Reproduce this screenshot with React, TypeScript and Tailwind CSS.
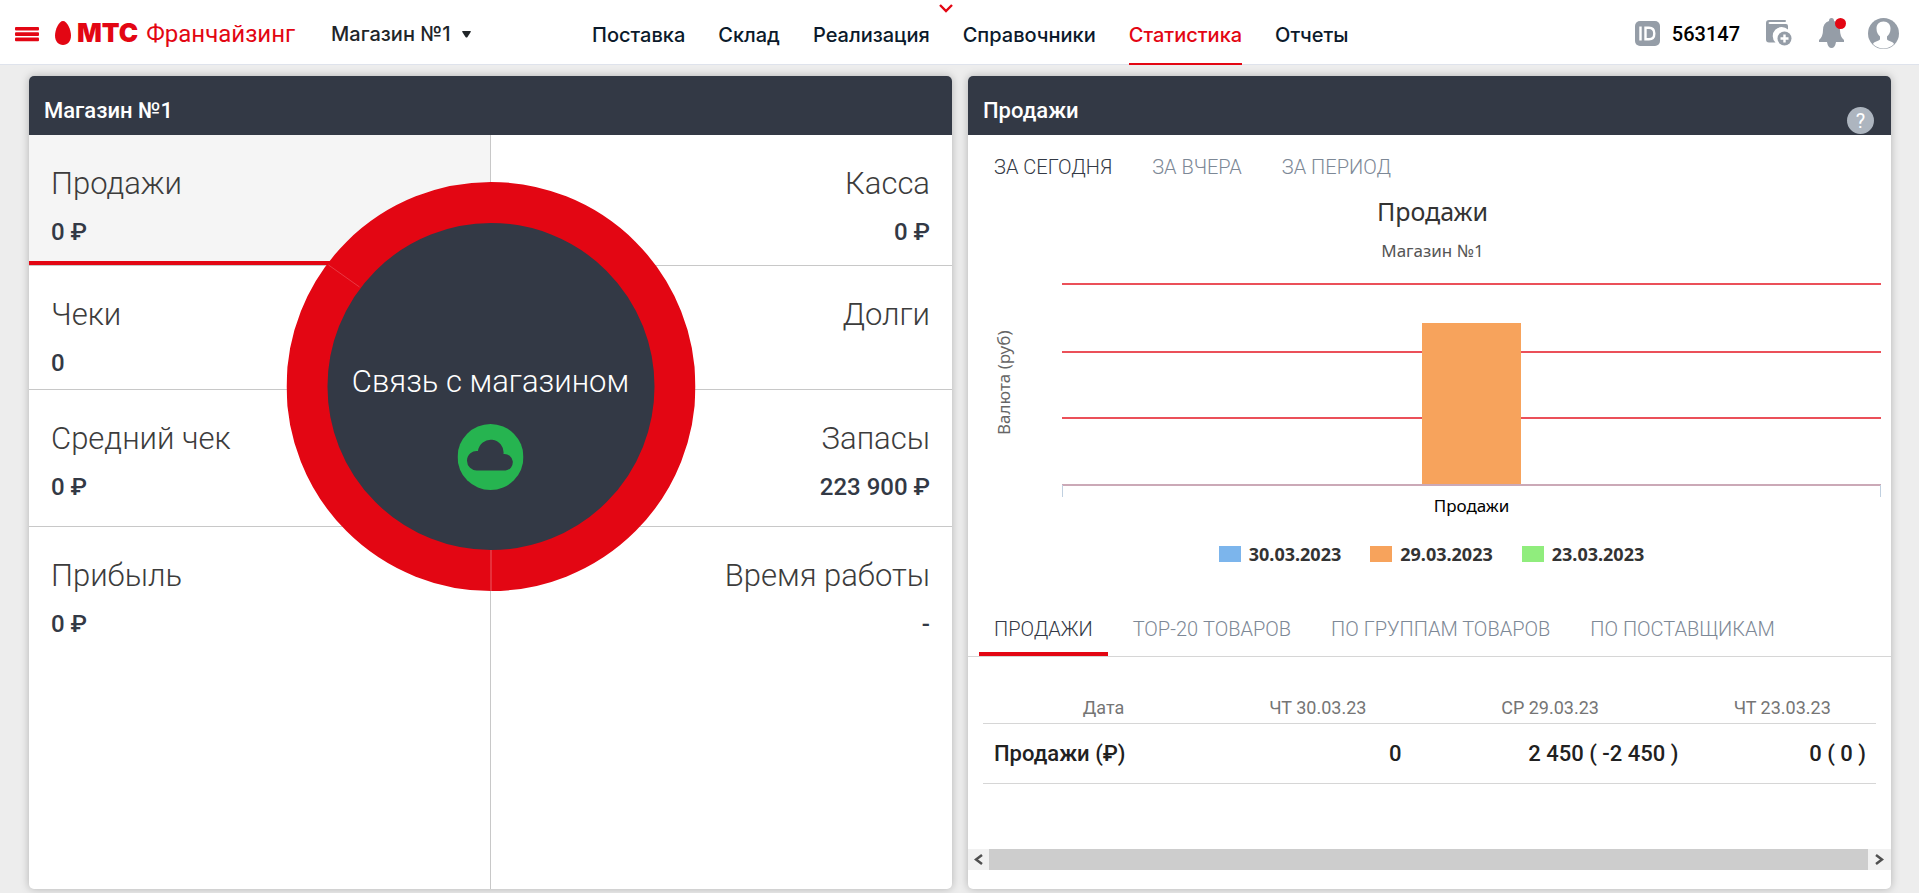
import { ReactNode } from "react"

type Metric = { name: string; value: string; height: string; active?: boolean }

const leftMetrics: Metric[] = [
  { name: "Продажи", value: "0 ₽", height: "h-[131px]", active: true },
  { name: "Чеки", value: "0", height: "h-[124px]" },
  { name: "Средний чек", value: "0 ₽", height: "h-[137px]" },
  { name: "Прибыль", value: "0 ₽", height: "grow" },
]

const rightMetrics: Metric[] = [
  { name: "Касса", value: "0 ₽", height: "h-[131px]" },
  { name: "Долги", value: "", height: "h-[124px]" },
  { name: "Запасы", value: "223 900 ₽", height: "h-[137px]" },
  { name: "Время работы", value: "-", height: "grow" },
]

const navItems = ["Поставка", "Склад", "Реализация", "Справочники", "Статистика", "Отчеты"]
const periods = ["ЗА СЕГОДНЯ", "ЗА ВЧЕРА", "ЗА ПЕРИОД"]
const reports = ["ПРОДАЖИ", "TOP-20 ТОВАРОВ", "ПО ГРУППАМ ТОВАРОВ", "ПО ПОСТАВЩИКАМ"]

const legend = [
  { date: "30.03.2023", color: "bg-[#7cb5ec]" },
  { date: "29.03.2023", color: "bg-[#f7a35c]" },
  { date: "23.03.2023", color: "bg-[#90ed7d]" },
]

function Header() {
  return (
    <header className="flex h-[65px] shrink-0 items-center border-b border-[#dfe3ec] bg-white pl-[15px] pr-5 font-['Inter',sans-serif] text-xl font-medium text-[#0b1a2b]">
      <div className="flex w-[577px] shrink-0 items-center">
        <button aria-label="Меню" className="mr-4 pt-1">
          <svg width="24" height="15" viewBox="0 0 24 15" fill="#e30613">
            <rect width="24" height="3.600" rx="1" />
            <rect y="5.300" width="24" height="3.600" rx="1" />
            <rect y="10.600" width="24" height="3.600" rx="1" />
          </svg>
        </button>
        <a href="#" className="flex items-center pt-0.5 text-[#e30613]">
          <svg width="16" height="24" viewBox="0 0 16 24" fill="currentColor">
            <path d="M8 0C4 0 0 8.400 0 14.600C0 20.400 3.400 24 8 24S16 20.400 16 14.600C16 8.400 12 0 8 0Z" />
          </svg>
          <span className="ml-1.5 text-[26px] leading-8 font-black">МТС</span>
          <span className="ml-2 pt-0.5 font-['Roboto'] text-2xl font-normal">Франчайзинг</span>
        </a>
        <button className="ml-9 flex items-center gap-3 pt-1 text-[#212529]">
          Магазин №1
          <svg width="9" height="7" viewBox="0 0 9 7" fill="currentColor">
            <path d="M0.500 0H8.500Q9 0 8.700 1L5.500 6Q4.500 7 3.500 6L0.300 1Q0 0 0.500 0Z" />
          </svg>
        </button>
      </div>

      <nav className="relative flex h-[65px] items-center gap-[33px]">
        {navItems.map((item) => (
          <a
            key={item}
            href="#"
            className={
              item === "Статистика"
                ? "flex h-[65px] items-center border-b-2 border-[#e30613] pt-2 text-[#e30613]"
                : "flex h-[65px] items-center border-b-2 border-transparent pt-2"
            }
          >
            {item}
          </a>
        ))}
        <button aria-label="Развернуть" className="absolute left-[347px] top-1">
          <svg className="block" width="14" height="9" viewBox="0 0 14 9" fill="none" stroke="#e30613" strokeWidth="2.400">
            <path d="M1 1L7 7L13 1" />
          </svg>
        </button>
      </nav>

      <div className="ml-auto flex items-center pt-0.5 text-[#959da7]">
        <svg width="25" height="25" viewBox="0 0 25 25" fill="none">
          <rect width="25" height="25" rx="5" fill="currentColor" />
          <path d="M5.500 5.500V19.500M10.500 6.700H14Q19.300 6.700 19.300 12.500T14 18.300H10.500Z" stroke="#fff" strokeWidth="2.400" />
        </svg>
        <span className="ml-3 pt-0.5 font-['Roboto'] text-black">563147</span>
        <button aria-label="Касса" className="ml-[26px]">
          <svg width="26" height="26" viewBox="0 0 26 26" fill="currentColor">
            <path d="M3 0H19Q20 0 20 1T19 2H4Q2.500 2 2.500 3T4 4H20Q22 4 22 6V9.500A9 9 0 0 0 9.500 22.500H3Q0 22.500 0 19.500V3Q0 0 3 0Z" />
            <circle cx="18.500" cy="18.500" r="7" />
            <path d="M18.500 14.500V22.500M14.500 18.500H22.500" stroke="#fff" strokeWidth="2.400" />
          </svg>
        </button>
        <button aria-label="Уведомления" className="ml-[27px]">
          <svg width="28" height="31" viewBox="0 0 28 31" fill="currentColor">
            <path d="M10 3Q10 0 12.500 0T15 3Q21 5 21 12Q21 19 25 22V24H17Q16 30 12.500 30T8 24H0V22Q4 19 4 12Q4 5 10 3Z" />
            <circle cx="21.500" cy="5.500" r="5.500" fill="#e30613" />
          </svg>
        </button>
        <button aria-label="Профиль" className="ml-[21px]">
          <svg width="31" height="31" viewBox="0 0 31 31">
            <circle cx="15.500" cy="15.500" r="15.500" fill="#959da7" />
            <path
              d="M15.500 3.500C11 3.500 8.500 6.500 8.500 10.500C8.500 14.500 10 16.500 12 18.500V21C12 23 6 23 5 26A14.500 14.500 0 0 0 26 26C25 23 19 23 19 21V18.500C21 16.500 22.500 14.500 22.500 10.500C22.500 6.500 20 3.500 15.500 3.500Z"
              fill="#fff"
            />
          </svg>
        </button>
      </div>
    </header>
  )
}

function Panel({ title, action, children }: { title: string; action?: ReactNode; children: ReactNode }) {
  return (
    <section className="flex min-w-0 flex-col overflow-hidden rounded-[5px] bg-white shadow-[0_0_8px_rgba(0,0,0,0.25)]">
      <div className="flex h-[59px] shrink-0 items-end justify-between bg-[#333945] pl-[15px] pr-[17px] text-white">
        <h2 className="pb-[10px] text-[22px] leading-7 font-medium">{title}</h2>
        {action}
      </div>
      {children}
    </section>
  )
}

function MetricCell({ metric, right }: { metric: Metric; right?: boolean }) {
  return (
    <div
      className={`flex flex-col border-[#c8c8c8] px-[22px] pt-[31px] ${metric.height} ${metric.height === "grow" ? "" : "border-b"} ${right ? "items-end" : "items-start"} ${metric.active ? "bg-[#f5f5f5] shadow-[inset_0_-4px_0_#e30613]" : ""}`}
    >
      <h3 className="text-[31px] leading-9 font-light text-[#3c3c3c]">{metric.name}</h3>
      <p className="mt-4 text-2xl leading-7 font-medium text-[#333945]">{metric.value}</p>
    </div>
  )
}

function StoreLink() {
  return (
    <button className="absolute left-1/2 top-[47px] flex size-[409px] -translate-x-1/2 flex-col items-center justify-center rounded-full pt-20 text-white">
      <svg className="absolute inset-0" width="409" height="409" viewBox="0 0 409 409">
        <circle cx="204.500" cy="204.500" r="184" fill="#333945" stroke="#e30613" strokeWidth="41" />
        {/* seams between the ring segments */}
        <path d="M42 83L73 105" stroke="#fff" strokeOpacity="0.200" />
        <path d="M204.500 368V409" stroke="#fff" strokeOpacity="0.350" />
      </svg>
      <span className="relative text-[31px] leading-9 font-light whitespace-nowrap">Связь с магазином</span>
      <svg className="relative mt-6" width="66" height="66" viewBox="0 0 66 66">
        <circle cx="33" cy="33" r="33" fill="#26b450" />
        <path
          d="M20 46.500A9.800 9.800 0 1 1 20.500 27A12.800 12.800 0 0 1 46 30A8.300 8.300 0 1 1 48 46.500Z"
          fill="#333945"
        />
      </svg>
    </button>
  )
}

function StorePanel() {
  return (
    <Panel title="Магазин №1">
      <div className="relative grid grow grid-cols-2">
        <div className="flex flex-col border-r border-[#c8c8c8]">
          {leftMetrics.map((m) => (
            <MetricCell key={m.name} metric={m} />
          ))}
        </div>
        <div className="flex flex-col">
          {rightMetrics.map((m) => (
            <MetricCell key={m.name} metric={m} right />
          ))}
        </div>
        <StoreLink />
      </div>
    </Panel>
  )
}

function SalesChart() {
  return (
    <figure className="flex flex-col font-['Noto_Sans',sans-serif] text-[17px] text-[#333333]">
      <h3 className="pl-1.5 text-center text-[25px] leading-8">Продажи</h3>
      <p className="mt-3 pl-1.5 text-center leading-6 text-[#555555]">Магазин №1</p>
      <div className="mt-[18px] flex">
        <div className="flex w-[94px] justify-start pl-6">
          <span className="h-[204px] rotate-180 text-center leading-6 text-[#666666] [writing-mode:vertical-rl]">
            Валюта (руб)
          </span>
        </div>
        <div className="min-w-0 grow pr-[10px]">
          <svg className="block w-full" height="217" shapeRendering="crispEdges">
            <g fill="#e30613" fillOpacity="0.700">
              <rect y="2" width="100%" height="2" />
              <rect y="70" width="100%" height="2" />
              <rect y="136" width="100%" height="2" />
            </g>
            <rect x="44%" y="42" width="12%" height="161" fill="#f7a35c" />
            <rect y="203" width="100%" height="2" fill="#cba9b7" />
            <rect y="204" width="1" height="12" fill="#c0d0e0" />
            <svg x="100%" overflow="visible">
              <rect x="-1" y="204" width="1" height="12" fill="#c0d0e0" />
            </svg>
          </svg>
          <p className="-mt-1 text-center leading-6 text-black">Продажи</p>
        </div>
      </div>
      <figcaption className="mt-6 flex justify-center gap-[29px] pl-1 text-lg font-bold">
        {legend.map((l) => (
          <span key={l.date} className="flex items-center gap-2 leading-6">
            <span className={`h-4 w-[22px] ${l.color}`} />
            {l.date}
          </span>
        ))}
      </figcaption>
    </figure>
  )
}

function SalesTable() {
  return (
    <table className="mx-[15px] mt-[35px] table-fixed border-collapse">
      <thead>
        <tr className="h-[31px] border-b border-[#d6d6d6] text-lg leading-6 text-[#757575]">
          <th className="w-[27%] pt-0.5 font-normal">Дата</th>
          <th className="w-[21%] pt-0.5 font-normal">ЧТ 30.03.23</th>
          <th className="w-[31%] pt-0.5 font-normal">СР 29.03.23</th>
          <th className="w-[21%] pt-0.5 font-normal">ЧТ 23.03.23</th>
        </tr>
      </thead>
      <tbody>
        <tr className="h-[60px] border-b border-[#d6d6d6] text-right text-[22px] font-medium text-[#212121]">
          <th className="px-[11px] text-left font-medium">Продажи (₽)</th>
          <td className="px-[10px]">0</td>
          <td className="px-[10px]">2 450 ( -2 450 )</td>
          <td className="px-[10px]">0 ( 0 )</td>
        </tr>
      </tbody>
    </table>
  )
}

function ScrollBar() {
  return (
    <div className="mt-auto mb-[19px] flex h-[21px] shrink-0 bg-[#f1f1f1] text-[#505050]">
      <button aria-label="Прокрутить влево" className="grid w-[21px] place-items-center">
        <svg width="9" height="11" viewBox="0 0 9 11" fill="none" stroke="currentColor" strokeWidth="2.500">
          <path d="M8 1L2 5.500L8 10" />
        </svg>
      </button>
      <div className="grow bg-[#cdcdcd]" />
      <button aria-label="Прокрутить вправо" className="grid w-[23px] place-items-center">
        <svg width="9" height="11" viewBox="0 0 9 11" fill="none" stroke="currentColor" strokeWidth="2.500">
          <path d="M1 1L7 5.500L1 10" />
        </svg>
      </button>
    </div>
  )
}

function SalesPanel() {
  return (
    <Panel
      title="Продажи"
      action={
        <button className="mb-px grid size-[27px] place-items-center rounded-full bg-[#adb5bf] text-xl leading-6">
          ?
        </button>
      }
    >
      <div className="flex gap-10 px-[26px] pt-[18px] pb-[14px] text-xl leading-7 font-light">
        {periods.map((p, i) => (
          <button key={p} className={i === 0 ? "text-[#333945]" : "text-[#7d8896]"}>
            {p}
          </button>
        ))}
      </div>
      <SalesChart />
      <div className="mt-[49px] flex gap-[10px] border-b border-[#d6d6d6] px-[11px] text-xl leading-7 font-light">
        {reports.map((r, i) => (
          <button
            key={r}
            className={
              i === 0
                ? "border-b-4 border-[#e30613] px-[15px] pb-[9px] text-[#333945]"
                : "border-b-4 border-transparent px-[15px] pb-[9px] text-[#7d8896]"
            }
          >
            {r}
          </button>
        ))}
      </div>
      <SalesTable />
      <ScrollBar />
    </Panel>
  )
}

export default function App() {
  return (
    <div className="flex min-h-screen flex-col bg-[#ededed] font-['Roboto',sans-serif]">
      <Header />
      <main className="grid grow grid-cols-2 gap-4 pt-[11px] pr-7 pb-1 pl-[29px]">
        <StorePanel />
        <SalesPanel />
      </main>
    </div>
  )
}
